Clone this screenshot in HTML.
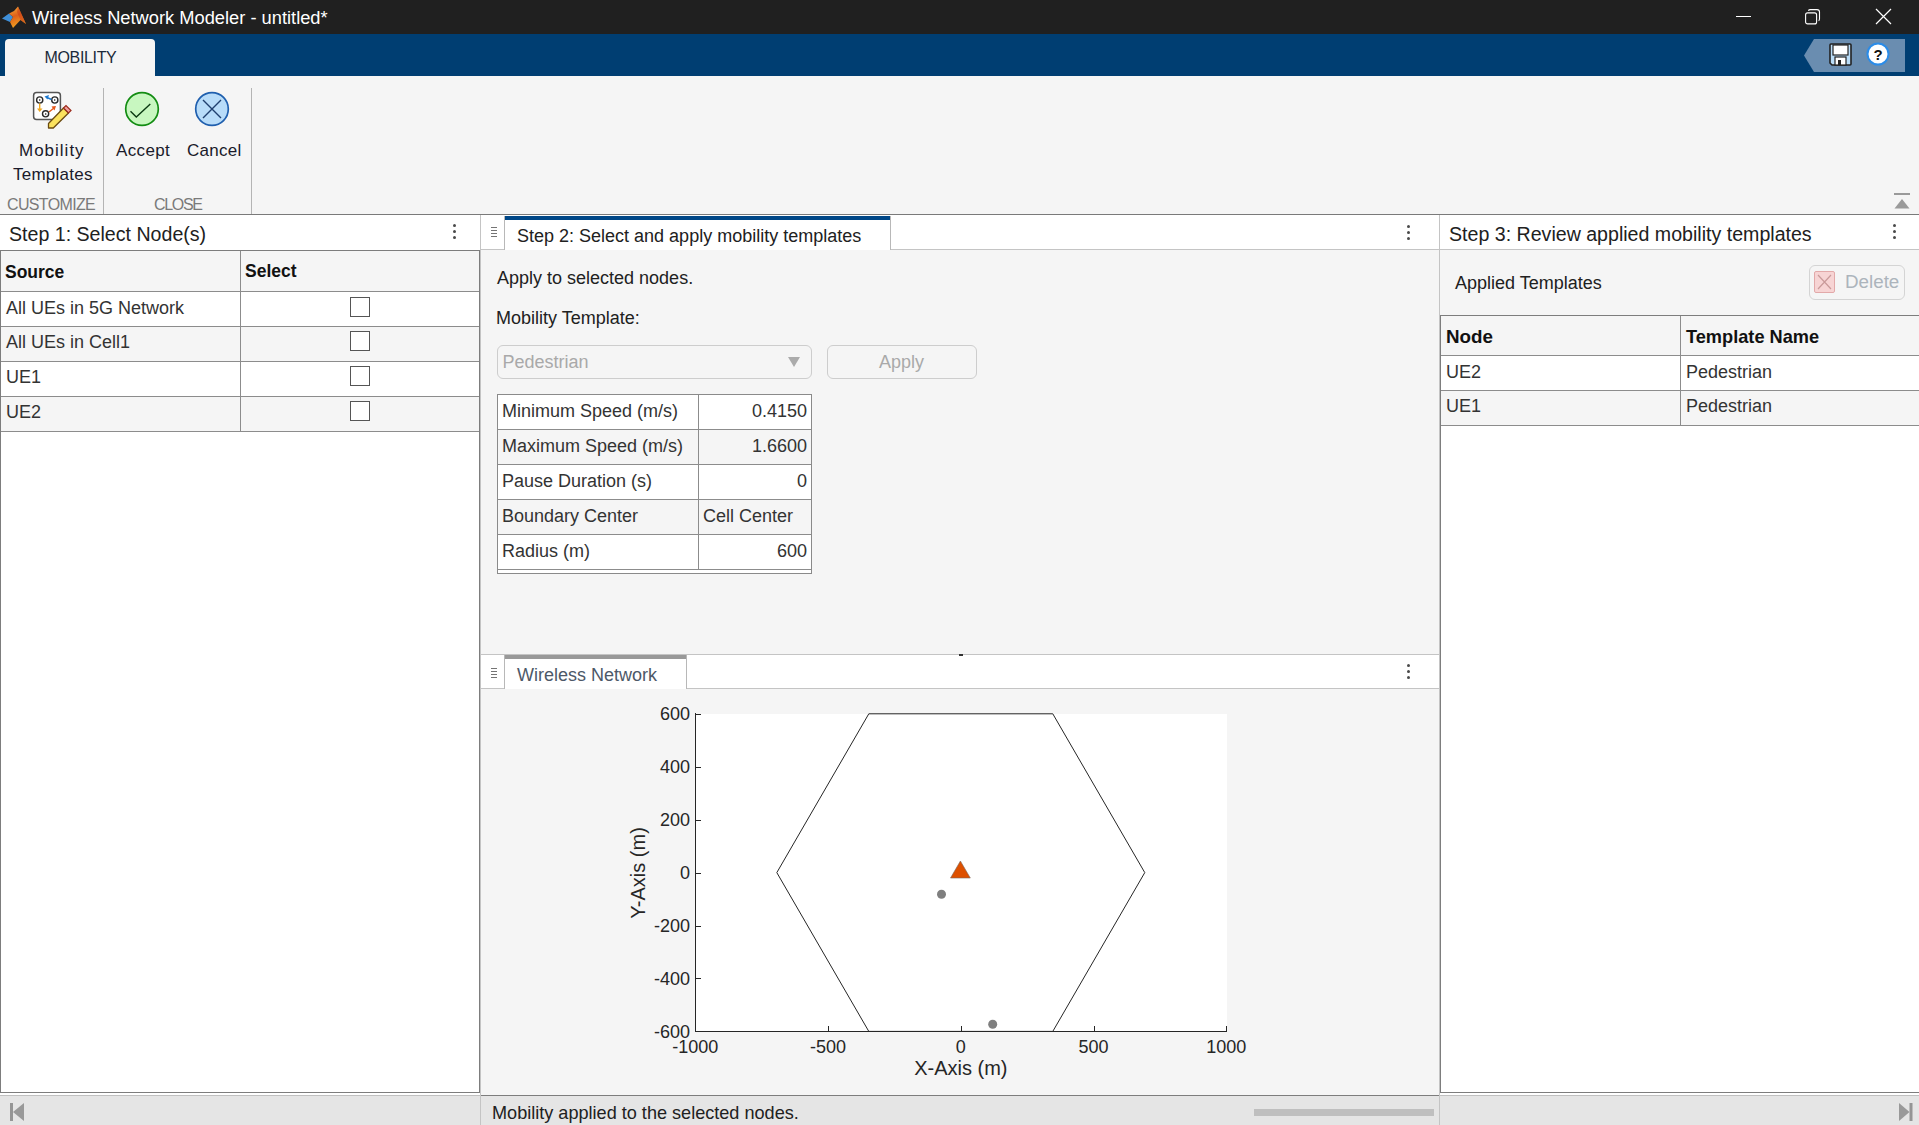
<!DOCTYPE html>
<html><head><meta charset="utf-8">
<style>
*{box-sizing:border-box;margin:0;padding:0}
html,body{width:1919px;height:1125px;overflow:hidden;background:#f5f5f5;font-family:"Liberation Sans",sans-serif;color:#212121}
.a{position:absolute}
.t{position:absolute;white-space:pre;line-height:1}
#title{left:0;top:0;width:1919px;height:34px;background:#202020}
#band{left:0;top:34px;width:1919px;height:42px;background:#003e72}
#tab{left:5px;top:39px;width:150px;height:37px;background:#f5f5f5;border-radius:4px 4px 0 0}
#strip{left:0;top:76px;width:1919px;height:139px;background:#f5f5f5;border-bottom:1px solid #7a7a7a}
.vsep{position:absolute;width:1px;background:#b4b4b4}
.hdr{position:absolute;background:#fff}
.bl{position:absolute;background:#8c8c8c}
.cb{position:absolute;width:20px;height:20px;border:1px solid #555;background:#fff}
.kebab{position:absolute;width:4px}
.kebab i{position:absolute;left:0.5px;width:3.2px;height:3.2px;border-radius:50%;background:#4a4a4a}
</style></head><body>
<!-- title bar -->
<div id="title" class="a"></div>
<svg class="a" style="left:2px;top:6px" width="25" height="23" viewBox="0 0 25 23">
  <defs><linearGradient id="lg" x1="0" y1="0" x2="0.3" y2="1"><stop offset="0" stop-color="#f7b23a"/><stop offset="0.5" stop-color="#e0601a"/><stop offset="1" stop-color="#f0a020"/></linearGradient></defs>
  <path d="M0 12.5 L7 7.5 L11 11 L8 16 Z" fill="#3f8fd8"/>
  <path d="M7 7.5 L12 5 L16 0.5 L19 7 L24 18 L18.5 14 L11 22 L8 16 L11 11 Z" fill="url(#lg)"/>
  <path d="M16 0.5 L19 7 L24 18 L18.5 14 L15 6 Z" fill="#c8401a" opacity="0.55"/>
</svg>
<div class="t" style="left:32px;top:8.5px;font-size:18.3px;color:#fff">Wireless Network Modeler - untitled*</div>
<div class="a" style="left:1736px;top:16px;width:15px;height:1px;background:#fff"></div>
<svg class="a" style="left:1804px;top:8px" width="18" height="18" viewBox="0 0 18 18">
  <rect x="1.6" y="4.9" width="11" height="11" rx="2" fill="none" stroke="#fff" stroke-width="1.1"/>
  <path d="M4.4 2.7 Q4.8 1.6 6.4 1.6 L13 1.6 Q15.5 1.6 15.5 4.1 L15.5 10.8 Q15.5 12.3 14.6 12.8" fill="none" stroke="#fff" stroke-width="1.1"/>
</svg>
<svg class="a" style="left:1875px;top:8px" width="18" height="18" viewBox="0 0 18 18">
  <path d="M1 1 L16 16 M16 1 L1 16" stroke="#fff" stroke-width="1.2"/>
</svg>
<!-- band -->
<div id="band" class="a"></div>
<div id="tab" class="a"></div>
<div class="t" style="left:44.5px;top:49.5px;font-size:16px;letter-spacing:-0.35px;color:#1b2a3a">MOBILITY</div>
<svg class="a" style="left:1804px;top:39px" width="101" height="33" viewBox="0 0 101 33">
  <path d="M10 0 L101 0 L101 33 L10 33 L0 16.5 Z" fill="#6a8db0"/>
</svg>
<svg class="a" style="left:1829px;top:43px" width="23" height="23" viewBox="0 0 23 23">
  <path d="M1 2 Q1 1 2 1 L21 1 Q22 1 22 2 L22 21 Q22 22 21 22 L3 22 L1 20 Z" fill="#b9dcf7" stroke="#222" stroke-width="1.6"/>
  <rect x="4" y="2" width="15" height="10" fill="#fff" stroke="#222" stroke-width="1.2"/>
  <rect x="6" y="14" width="11" height="8" fill="#fff" stroke="#222" stroke-width="1.2"/>
  <rect x="9" y="17" width="3" height="5" fill="#222"/>
</svg>
<svg class="a" style="left:1866px;top:42px" width="24" height="24" viewBox="0 0 24 24">
  <circle cx="12" cy="12" r="10.5" fill="#fff" stroke="#2b8ce8" stroke-width="2"/>
  <text x="12" y="18" text-anchor="middle" font-family="Liberation Sans" font-weight="bold" font-size="15" fill="#111">?</text>
</svg>
<!-- toolstrip -->
<div id="strip" class="a"></div>
<!-- toolstrip content -->
<svg class="a" style="left:32px;top:91px" width="40" height="40" viewBox="0 0 40 40">
  <rect x="1.6" y="1.6" width="26.8" height="27" rx="3" fill="#fff" stroke="#555" stroke-width="1.5"/>
  <circle cx="7.7" cy="9" r="3.1" fill="#fff" stroke="#2a2a2a" stroke-width="1.4"/><path d="M7 8 L9 9 L7 10 Z" fill="#333"/>
  <circle cx="22.8" cy="9" r="3.1" fill="#fff" stroke="#2a2a2a" stroke-width="1.4"/><path d="M22 8 L24 9 L22 10 Z" fill="#333"/>
  <circle cx="13.6" cy="22.8" r="3.1" fill="#fff" stroke="#2a2a2a" stroke-width="1.4"/><path d="M13 22 L15 23 L13 24 Z" fill="#333"/>
  <path d="M19.5 8.5 L15 6.5" stroke="#1f7ad0" stroke-width="1.4"/><path d="M12.5 5.5 L17 4 L15.5 8.5 Z" fill="#1f7ad0"/>
  <path d="M7.7 12.5 L7.7 18" stroke="#f0a820" stroke-width="1.4"/><path d="M5 17.5 L10.5 17.5 L7.7 21 Z" fill="#f0a820"/>
  <path d="M17 21 L22 17" stroke="#e8581a" stroke-width="1.4"/><path d="M24 15 L19.5 15.5 L22.5 19.5 Z" fill="#e8581a"/>
  <path d="M16.5 37 L16.5 32.5 L31.5 17 L36.5 22 L21.3 37 Z" fill="#fbe25e" stroke="#6a4a10" stroke-width="1.3" stroke-linejoin="round"/>
  <path d="M31.5 17 L34 14.5 L39 19.5 L36.5 22 Z" fill="#f2a0a0" stroke="#9a2a1a" stroke-width="1.2"/>
</svg>
<div class="vsep" style="left:103px;top:88px;height:126px"></div>
<div class="vsep" style="left:251px;top:88px;height:126px"></div>
<svg class="a" style="left:124px;top:91px" width="36" height="36" viewBox="0 0 36 36">
  <circle cx="18" cy="18" r="16.3" fill="#c8f7c0" stroke="#128c12" stroke-width="1.7"/>
  <path d="M6.5 20.3 L12.3 26 L26.3 13" fill="none" stroke="#0b3a12" stroke-width="1.4"/>
</svg>
<svg class="a" style="left:194px;top:91px" width="36" height="36" viewBox="0 0 36 36">
  <circle cx="18" cy="18" r="16.3" fill="#b8dcf9" stroke="#1f5fae" stroke-width="1.7"/>
  <path d="M9 9 L27 27 M27 9 L9 27" fill="none" stroke="#1f3f6e" stroke-width="1.4"/>
</svg>
<div class="t" style="left:19px;top:142px;font-size:17px;letter-spacing:1px;color:#1a1a2a">Mobility</div>
<div class="t" style="left:13px;top:166px;font-size:17px;letter-spacing:0.25px;color:#1a1a2a">Templates</div>
<div class="t" style="left:116px;top:142px;font-size:17px;letter-spacing:0.35px;color:#1a1a2a">Accept</div>
<div class="t" style="left:187px;top:142px;font-size:17px;letter-spacing:0.25px;color:#1a1a2a">Cancel</div>
<div class="t" style="left:7px;top:197px;font-size:16px;letter-spacing:-0.65px;color:#7a7a7a">CUSTOMIZE</div>
<div class="t" style="left:154px;top:197px;font-size:16px;letter-spacing:-1.3px;color:#7a7a7a">CLOSE</div>
<svg class="a" style="left:1893px;top:192px" width="18" height="18" viewBox="0 0 18 18">
  <rect x="1" y="1" width="16" height="2" fill="#9a9a9a"/>
  <path d="M1.5 16.5 L9 7 L16.5 16.5 Z" fill="#9a9a9a"/>
</svg>
<!-- STEP 1 panel -->
<div class="a" style="left:0;top:215px;width:480px;height:880px;background:#fff"></div>
<div class="a" style="left:480px;top:215px;width:1px;height:910px;background:#c4c4c4"></div>
<div class="a" style="left:1439px;top:215px;width:1px;height:910px;background:#c4c4c4"></div>
<div class="t" style="left:9px;top:225px;font-size:19.6px;color:#212121">Step 1: Select Node(s)</div>
<div class="kebab" style="left:452px;top:224px"><i style="top:0"></i><i style="top:6px"></i><i style="top:12px"></i></div>
<!-- table 1 -->
<div class="a" style="left:0;top:250px;width:480px;height:843px;border:1px solid #7d7d7d;background:#fff"></div>
<div class="a" style="left:1px;top:251px;width:478px;height:40px;background:#f5f5f5"></div>
<div class="a" style="left:1px;top:327px;width:478px;height:34px;background:#f5f5f5"></div>
<div class="a" style="left:1px;top:397px;width:478px;height:34px;background:#f5f5f5"></div>
<div class="bl" style="left:1px;top:291px;width:478px;height:1px"></div>
<div class="bl" style="left:1px;top:326px;width:478px;height:1px"></div>
<div class="bl" style="left:1px;top:361px;width:478px;height:1px"></div>
<div class="bl" style="left:1px;top:396px;width:478px;height:1px"></div>
<div class="bl" style="left:1px;top:431px;width:478px;height:1px"></div>
<div class="bl" style="left:240px;top:251px;width:1px;height:180px"></div>
<div class="t" style="left:5px;top:263.5px;font-size:17.5px;font-weight:bold;color:#111">Source</div>
<div class="t" style="left:245px;top:263px;font-size:17.5px;font-weight:bold;color:#111">Select</div>
<div class="t" style="left:6px;top:299px;font-size:18px;color:#333">All UEs in 5G Network</div>
<div class="t" style="left:6px;top:333px;font-size:18px;color:#333">All UEs in Cell1</div>
<div class="t" style="left:6px;top:368px;font-size:18px;color:#333">UE1</div>
<div class="t" style="left:6px;top:403px;font-size:18px;color:#333">UE2</div>
<div class="cb" style="left:350px;top:297px"></div>
<div class="cb" style="left:350px;top:331px"></div>
<div class="cb" style="left:350px;top:366px"></div>
<div class="cb" style="left:350px;top:401px"></div>

<!-- STEP 2 panel -->
<div class="a" style="left:481px;top:215px;width:958px;height:34px;background:#fff"></div>
<div class="a" style="left:481px;top:249px;width:958px;height:1px;background:#c4c4c4"></div>
<div class="a" style="left:481px;top:250px;width:958px;height:404px;background:#f5f5f5"></div>
<div class="a" style="left:504px;top:216px;width:1px;height:34px;background:#b8b8b8"></div>
<div class="a" style="left:890px;top:216px;width:1px;height:34px;background:#b8b8b8"></div>
<div class="a" style="left:505px;top:216px;width:385px;height:34px;background:#fff"></div>
<div class="a" style="left:505px;top:216px;width:385px;height:4px;background:#004787"></div>
<div class="a" style="left:491px;top:227px;width:6px;height:1px;background:#747474"></div>
<div class="a" style="left:491px;top:230px;width:6px;height:1px;background:#747474"></div>
<div class="a" style="left:491px;top:233px;width:6px;height:1px;background:#747474"></div>
<div class="a" style="left:491px;top:236px;width:6px;height:1px;background:#747474"></div>
<div class="t" style="left:517px;top:227px;font-size:18px;color:#212121">Step 2: Select and apply mobility templates</div>
<div class="kebab" style="left:1406px;top:225px"><i style="top:0"></i><i style="top:6px"></i><i style="top:12px"></i></div>
<div class="t" style="left:497px;top:269px;font-size:18px;color:#212121">Apply to selected nodes.</div>
<div class="t" style="left:496px;top:309px;font-size:18px;color:#212121">Mobility Template:</div>
<div class="a" style="left:497px;top:345px;width:315px;height:34px;border:1px solid #cdcdcd;border-radius:6px;background:#f5f5f5"></div>
<div class="t" style="left:502.5px;top:353px;font-size:18px;color:#a9a9a9">Pedestrian</div>
<svg class="a" style="left:788px;top:357px" width="12" height="10" viewBox="0 0 12 10"><path d="M0 0 L12 0 L6 10 Z" fill="#ababab"/></svg>
<div class="a" style="left:827px;top:345px;width:150px;height:34px;border:1px solid #cdcdcd;border-radius:6px;background:#f5f5f5"></div>
<div class="t" style="left:879px;top:353px;font-size:18px;color:#a9a9a9">Apply</div>
<!-- props table -->
<div class="a" style="left:497px;top:394px;width:315px;height:180px;border:1px solid #8a8a8a;background:#fff"></div>
<div class="a" style="left:498px;top:430px;width:313px;height:34px;background:#f5f5f5"></div>
<div class="a" style="left:498px;top:500px;width:313px;height:34px;background:#f5f5f5"></div>
<div class="bl" style="left:498px;top:429px;width:313px;height:1px"></div>
<div class="bl" style="left:498px;top:464px;width:313px;height:1px"></div>
<div class="bl" style="left:498px;top:499px;width:313px;height:1px"></div>
<div class="bl" style="left:498px;top:534px;width:313px;height:1px"></div>
<div class="bl" style="left:498px;top:569px;width:313px;height:1px"></div>
<div class="bl" style="left:698px;top:395px;width:1px;height:174px"></div>
<div class="t" style="left:502px;top:402px;font-size:18px;color:#333">Minimum Speed (m/s)</div>
<div class="t" style="left:502px;top:437px;font-size:18px;color:#333">Maximum Speed (m/s)</div>
<div class="t" style="left:502px;top:472px;font-size:18px;color:#333">Pause Duration (s)</div>
<div class="t" style="left:502px;top:507px;font-size:18px;color:#333">Boundary Center</div>
<div class="t" style="left:502px;top:542px;font-size:18px;color:#333">Radius (m)</div>
<div class="t" style="left:699px;width:108px;text-align:right;top:402px;font-size:18px;color:#333">0.4150</div>
<div class="t" style="left:699px;width:108px;text-align:right;top:437px;font-size:18px;color:#333">1.6600</div>
<div class="t" style="left:699px;width:108px;text-align:right;top:472px;font-size:18px;color:#333">0</div>
<div class="t" style="left:703px;top:507px;font-size:18px;color:#333">Cell Center</div>
<div class="t" style="left:699px;width:108px;text-align:right;top:542px;font-size:18px;color:#333">600</div>

<!-- Wireless network panel -->
<div class="a" style="left:481px;top:654px;width:958px;height:1px;background:#c4c4c4"></div>
<div class="a" style="left:481px;top:655px;width:958px;height:33px;background:#fff"></div>
<div class="a" style="left:481px;top:688px;width:958px;height:1px;background:#c4c4c4"></div>
<div class="a" style="left:481px;top:689px;width:958px;height:406px;background:#f5f5f5"></div>
<div class="a" style="left:504px;top:655px;width:1px;height:34px;background:#b8b8b8"></div>
<div class="a" style="left:686px;top:655px;width:1px;height:34px;background:#b8b8b8"></div>
<div class="a" style="left:505px;top:655px;width:181px;height:34px;background:#fff"></div>
<div class="a" style="left:505px;top:655px;width:181px;height:4px;background:#999"></div>
<div class="a" style="left:491px;top:668px;width:6px;height:1px;background:#747474"></div>
<div class="a" style="left:491px;top:671px;width:6px;height:1px;background:#747474"></div>
<div class="a" style="left:491px;top:674px;width:6px;height:1px;background:#747474"></div>
<div class="a" style="left:491px;top:677px;width:6px;height:1px;background:#747474"></div>
<div class="t" style="left:517px;top:666px;font-size:18px;color:#4d5868">Wireless Network</div>
<div class="kebab" style="left:1406px;top:664px"><i style="top:0"></i><i style="top:6px"></i><i style="top:12px"></i></div>
<div class="a" style="left:959px;top:654px;width:4px;height:2px;background:#333"></div>

<!-- chart -->
<svg class="a" style="left:0;top:0" width="1919" height="1125" viewBox="0 0 1919 1125">
<rect x="696" y="714" width="531" height="317" fill="#fff"/>
<polygon points="1144.78,872.60 1052.79,713.80 868.81,713.80 776.82,872.60 868.81,1031.40 1052.79,1031.40" fill="none" stroke="#262626" stroke-width="1"/>
<path d="M695.5 713 L695.5 1031.5 L1227 1031.5" fill="none" stroke="#262626" stroke-width="1"/>
<path d="M695.5 1031 L695.5 1026 M828.5 1031 L828.5 1026 M961.5 1031 L961.5 1026 M1094.5 1031 L1094.5 1026 M1226.5 1031 L1226.5 1026 M695 714.5 L701 714.5 M695 767.5 L701 767.5 M695 820.5 L701 820.5 M695 873.5 L701 873.5 M695 926.5 L701 926.5 M695 978.5 L701 978.5 M695 1031.5 L701 1031.5" stroke="#262626" stroke-width="1"/>
<path d="M960.4 861 L970.3 878 L950.5 878 Z" fill="#dd5000" stroke="#7a6a60" stroke-width="0.6"/>
<circle cx="941.5" cy="894.3" r="4.5" fill="#7f7f7f"/>
<circle cx="992.7" cy="1024.3" r="4.5" fill="#7f7f7f"/>
<text x="690" y="720.3" text-anchor="end" font-family="Liberation Sans" font-size="18" fill="#262626">600</text>
<text x="690" y="773.2" text-anchor="end" font-family="Liberation Sans" font-size="18" fill="#262626">400</text>
<text x="690" y="826.2" text-anchor="end" font-family="Liberation Sans" font-size="18" fill="#262626">200</text>
<text x="690" y="879.1" text-anchor="end" font-family="Liberation Sans" font-size="18" fill="#262626">0</text>
<text x="690" y="932.0" text-anchor="end" font-family="Liberation Sans" font-size="18" fill="#262626">-200</text>
<text x="690" y="985.0" text-anchor="end" font-family="Liberation Sans" font-size="18" fill="#262626">-400</text>
<text x="690" y="1037.9" text-anchor="end" font-family="Liberation Sans" font-size="18" fill="#262626">-600</text>
<text x="695.2" y="1053" text-anchor="middle" font-family="Liberation Sans" font-size="18" fill="#262626">-1000</text>
<text x="828.0" y="1053" text-anchor="middle" font-family="Liberation Sans" font-size="18" fill="#262626">-500</text>
<text x="960.8" y="1053" text-anchor="middle" font-family="Liberation Sans" font-size="18" fill="#262626">0</text>
<text x="1093.6" y="1053" text-anchor="middle" font-family="Liberation Sans" font-size="18" fill="#262626">500</text>
<text x="1226.3" y="1053" text-anchor="middle" font-family="Liberation Sans" font-size="18" fill="#262626">1000</text>
<text x="960.8" y="1075" text-anchor="middle" font-family="Liberation Sans" font-size="20" fill="#262626">X-Axis (m)</text>
<text transform="translate(645 872.9) rotate(-90)" x="0" y="0" text-anchor="middle" font-family="Liberation Sans" font-size="20" fill="#262626">Y-Axis (m)</text>
</svg>
<!-- STEP 3 panel -->
<div class="a" style="left:1440px;top:215px;width:479px;height:34px;background:#fff"></div>
<div class="a" style="left:1440px;top:249px;width:479px;height:1px;background:#c4c4c4"></div>
<div class="a" style="left:1440px;top:250px;width:479px;height:845px;background:#f5f5f5"></div>
<div class="t" style="left:1449px;top:225px;font-size:19.6px;color:#212121">Step 3: Review applied mobility templates</div>
<div class="kebab" style="left:1892px;top:224px"><i style="top:0"></i><i style="top:6px"></i><i style="top:12px"></i></div>
<div class="t" style="left:1455px;top:274px;font-size:18px;color:#212121">Applied Templates</div>
<div class="a" style="left:1809px;top:265px;width:96px;height:35px;border:1px solid #d4d4d4;border-radius:6px;background:#f5f5f5"></div>
<svg class="a" style="left:1814px;top:271px" width="21" height="22" viewBox="0 0 21 22">
  <rect x="0.5" y="0.5" width="20" height="21" rx="1.5" fill="#f7d4d4" stroke="#e2a9a9"/>
  <path d="M4 4 L17 18 M17 4 L4 18" stroke="#c99a9a" stroke-width="1.2"/>
</svg>
<div class="t" style="left:1845px;top:273px;font-size:18.8px;color:#acb4bc">Delete</div>
<div class="a" style="left:1440px;top:315px;width:490px;height:778px;border:1px solid #7d7d7d;background:#fff"></div>
<div class="a" style="left:1441px;top:316px;width:478px;height:40px;background:#f5f5f5"></div>
<div class="a" style="left:1441px;top:391px;width:478px;height:35px;background:#f5f5f5"></div>
<div class="bl" style="left:1441px;top:355px;width:478px;height:1px"></div>
<div class="bl" style="left:1441px;top:390px;width:478px;height:1px"></div>
<div class="bl" style="left:1441px;top:425px;width:478px;height:1px"></div>
<div class="bl" style="left:1680px;top:316px;width:1px;height:109px"></div>
<div class="t" style="left:1446px;top:328px;font-size:18.8px;font-weight:bold;color:#111">Node</div>
<div class="t" style="left:1686px;top:328px;font-size:18.2px;font-weight:bold;color:#111">Template Name</div>
<div class="t" style="left:1446px;top:363px;font-size:18px;color:#333">UE2</div>
<div class="t" style="left:1686px;top:363px;font-size:18px;color:#333">Pedestrian</div>
<div class="t" style="left:1446px;top:397px;font-size:18px;color:#333">UE1</div>
<div class="t" style="left:1686px;top:397px;font-size:18px;color:#333">Pedestrian</div>

<!-- status bar -->
<div class="a" style="left:0;top:1093px;width:1919px;height:2px;background:#fff"></div>
<div class="a" style="left:481px;top:1093px;width:958px;height:2px;background:#f5f5f5"></div>
<div class="a" style="left:0;top:1095px;width:1919px;height:1px;background:#c0c0c0"></div>
<div class="a" style="left:481px;top:1095px;width:958px;height:1px;background:#7d7d7d"></div>
<div class="a" style="left:0;top:1096px;width:1919px;height:29px;background:#e5e5e5"></div>
<div class="a" style="left:480px;top:1093px;width:1px;height:32px;background:#c4c4c4"></div>
<div class="a" style="left:1439px;top:1093px;width:1px;height:32px;background:#c4c4c4"></div>
<div class="t" style="left:492px;top:1104px;font-size:18.1px;color:#212121">Mobility applied to the selected nodes.</div>
<div class="a" style="left:1254px;top:1109px;width:180px;height:7px;background:#bfbfbf"></div>
<svg class="a" style="left:10px;top:1103px" width="14" height="18" viewBox="0 0 14 18"><rect x="0" y="0" width="3" height="18" fill="#959595"/><path d="M3 9 L14 0 L14 18 Z" fill="#999"/></svg>
<svg class="a" style="left:1899px;top:1103px" width="14" height="18" viewBox="0 0 14 18"><rect x="10.5" y="0" width="3" height="18" fill="#959595"/><path d="M0 0 L10.5 9 L0 18 Z" fill="#999"/></svg>
</body></html>
